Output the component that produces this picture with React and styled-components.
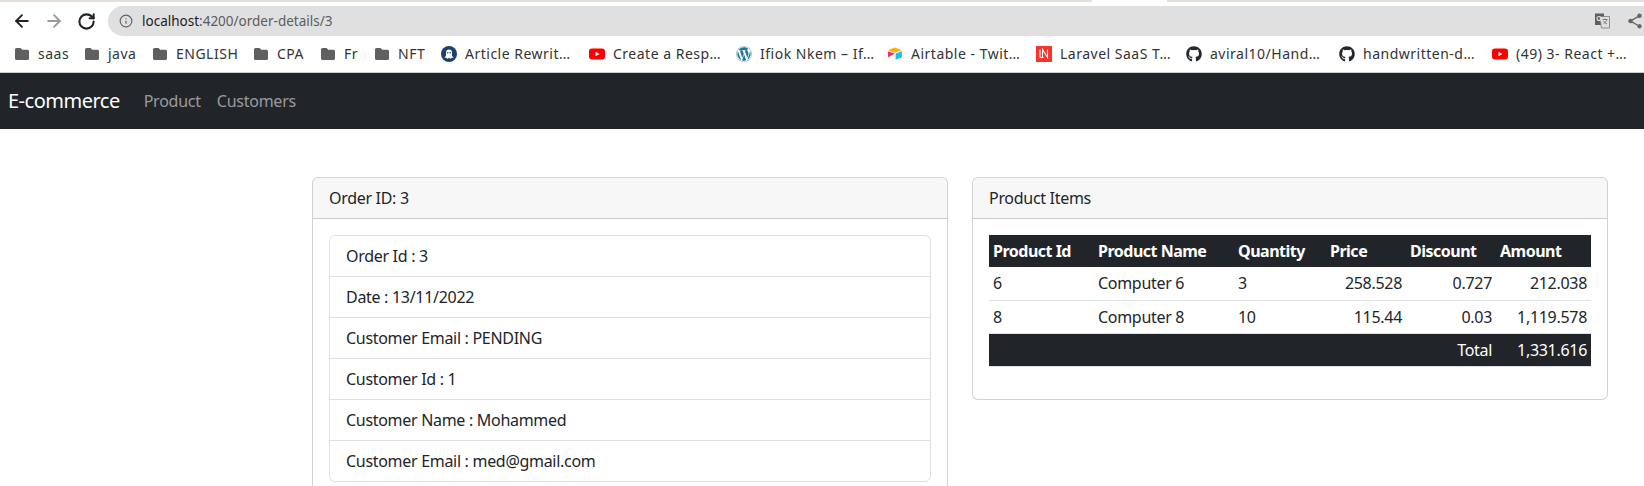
import React from "react";
import styled, { createGlobalStyle } from "styled-components";
import { ArrowLeft, ArrowRight, RotateCw, Info } from "lucide-react";
import { FaGithub, FaWordpress } from "react-icons/fa";
import { MdShare } from "react-icons/md";

const GlobalStyle = createGlobalStyle`
  * { box-sizing: border-box; }
  html, body { margin: 0; padding: 0; background: #fff; }
  body {
    font-family: "Noto Sans", "Open Sans", sans-serif;
    font-size: 16px;
    line-height: 24px;
    color: #212529;
    height: 486px;
    overflow: hidden;
  }
`;

const TabStrip = styled.div`
  height: 2px;
  background: linear-gradient(to right, #e6dfd9 0, #e6dfd9 1092px, #fff 1092px, #fff 1167px, #e6dfd9 1167px);
`;

const Toolbar = styled.div`
  height: 34px;
  display: flex;
  align-items: center;
  padding: 4px 0 0 12px;
  gap: 12px;
  background: #fff;
`;

const NavIcon = styled.span`
  display: flex;
  justify-content: center;
  width: 20px;
  color: ${({ $muted }) => ($muted ? "#9a9a9a" : "#222")};
`;

const UrlBar = styled.div`
  flex: 1;
  height: 30px;
  border-radius: 15px 0 0 15px;
  background: #e0e0e0;
  display: flex;
  align-items: center;
  padding-left: 11px;
  font-size: 13.5px;
  color: #5c5c5c;
  overflow: hidden;
`;

const UrlHost = styled.span`
  color: #202124;
  margin-left: 9px;
`;

const UrlActions = styled.div`
  margin-left: auto;
  display: flex;
  align-items: center;
  gap: 16px;
  color: #666;
`;

const Bookmarks = styled.div`
  height: 37px;
  display: flex;
  align-items: center;
  padding-left: 14px;
  border-bottom: 1px solid #cfcfcf;
  font-size: 14px;
  color: #333;
  white-space: nowrap;
  overflow: hidden;
`;

const Bookmark = styled.div`
  display: flex;
  align-items: center;
  gap: 8px;
  flex: none;
  width: ${({ $w }) => $w}px;
`;

const BookmarkLabel = styled.span`
  letter-spacing: 0.5px;
`;

const Navbar = styled.nav`
  height: 56px;
  background: #212529;
  display: flex;
  align-items: center;
  padding-left: 8px;
`;

const Brand = styled.a`
  color: #fff;
  font-size: 20px;
  margin-right: 16px;
  letter-spacing: -0.5px;
`;

const NavLink = styled.a`
  color: rgba(255, 255, 255, 0.55);
  padding: 8px;
  letter-spacing: -0.25px;
`;

const Row = styled.main`
  display: flex;
  gap: 24px;
  padding: 48px 36px 0 312px;
  align-items: flex-start;
`;

const Card = styled.section`
  flex: 1;
  min-width: 0;
  border: 1px solid rgba(0, 0, 0, 0.175);
  border-radius: 6px;
  background: #fff;
`;

const CardHeader = styled.div`
  padding: 8px 16px;
  background: rgba(0, 0, 0, 0.03);
  border-bottom: 1px solid rgba(0, 0, 0, 0.175);
  border-radius: 5px 5px 0 0;
  letter-spacing: -0.3px;
`;

const CardBody = styled.div`
  padding: 16px;
`;

const ListGroup = styled.ul`
  list-style: none;
  margin: 0;
  padding: 0;
  border: 1px solid rgba(0, 0, 0, 0.125);
  border-radius: 6px;
`;

const ListItem = styled.li`
  padding: 8px 16px;
  height: 41px;
  letter-spacing: -0.3px;
  border-bottom: 1px solid rgba(0, 0, 0, 0.125);
  &:last-child { border-bottom: 0; height: 40px; }
`;

const Table = styled.table`
  width: 100%;
  border-collapse: collapse;
  table-layout: fixed;
  margin-bottom: 16px;
  letter-spacing: -0.3px;
`;

const HeadCell = styled.th`
  background: #212529;
  color: #fff;
  font-weight: 700;
  text-align: left;
  padding: 4px;
  height: 32px;
  width: ${({ $w }) => $w}px;
  letter-spacing: -0.5px;
`;

const Cell = styled.td`
  padding: 4px 4px;
  height: 33px;
  text-align: ${({ $right }) => ($right ? "right" : "left")};
  border-bottom: 1px solid #dee2e6;
`;

const TotalCell = styled(Cell)`
  background: #212529;
  color: #fff;
`;

const FolderIcon = () => (
  <svg width="16" height="16" viewBox="0 0 16 16">
    <path d="M2.5 2h4l1.8 1.8h5.2A1.5 1.5 0 0 1 15 5.3v7.2a1.5 1.5 0 0 1-1.5 1.5h-11A1.5 1.5 0 0 1 1 12.5v-9A1.5 1.5 0 0 1 2.5 2z" fill="#5f5f5f" />
  </svg>
);

const YoutubeIcon = () => (
  <svg width="16" height="16" viewBox="0 0 16 16">
    <rect x="0" y="2.5" width="16" height="11" rx="3" fill="#f00" />
    <path d="M6.5 5.8L10.4 8l-3.9 2.2z" fill="#fff" />
  </svg>
);

const GhostIcon = () => (
  <svg width="16" height="16" viewBox="0 0 16 16">
    <circle cx="8" cy="8" r="8" fill="#1d3f72" />
    <path d="M5 9.5V6.5a3 3 0 0 1 6 0v3c0 .8.8 1.5 1.8 1.5-.3.8-1.3 1-2.2.6.1.7-.5 1.3-1.3 1.2L8 11.8l-1.3 1c-.8.1-1.4-.5-1.3-1.2-.9.4-1.9.2-2.2-.6C4.2 11 5 10.3 5 9.5z" fill="#fff" />
    <circle cx="6.8" cy="6.8" r="0.8" fill="#1d3f72" />
    <circle cx="9.2" cy="6.8" r="0.8" fill="#1d3f72" />
  </svg>
);

const AirtableIcon = () => (
  <svg width="16" height="16" viewBox="0 0 16 16">
    <path d="M7 1.8L1.8 3.9c-.3.1-.3.5 0 .6L7 6.6c.6.2 1.2.2 1.8 0L14 4.5c.3-.1.3-.5 0-.6L8.8 1.8C8.2 1.6 7.6 1.6 7 1.8z" fill="#fcb400" />
    <path d="M8.6 7.9v5.4c0 .3.3.4.5.3l5.5-2.2c.2-.1.3-.2.3-.4V5.6c0-.3-.3-.4-.5-.3L8.9 7.5c-.2.1-.3.2-.3.4z" fill="#18bfff" />
    <path d="M7.4 8.1L1.5 11c-.3.1-.5-.1-.5-.3V5.7c0-.1 0-.2.1-.2.1-.1.2-.1.3 0L7.4 7.6c.3.1.3.4 0 .5z" fill="#f82b60" />
  </svg>
);

const LaravelNewsIcon = () => (
  <svg width="16" height="16" viewBox="0 0 16 16">
    <rect width="16" height="16" fill="#f9322c" />
    <path d="M4 3.5v8h3.5M6.5 11.5v-8l5 8v-8" stroke="#fff" strokeWidth="1.1" fill="none" />
  </svg>
);

const TranslateIcon = () => (
  <svg width="15" height="16" viewBox="0 0 15 16">
    <rect x="0" y="0.5" width="9" height="11.5" fill="#5f5f5f" />
    <path d="M4.5 3.5h10v11.5H6.5z" fill="#e0e0e0" stroke="#777" strokeWidth="0.8" />
    <path d="M7.5 6.5h5M10 5.5v1M11.8 6.5c-.4 1.8-1.7 3.2-3.3 4.2M8.5 7.8c.6 1.3 1.8 2.5 3.5 3" stroke="#666" fill="none" strokeWidth="0.8" />
    <circle cx="4" cy="5.5" r="2" fill="none" stroke="#e0e0e0" strokeWidth="1.1" />
  </svg>
);

const bookmarks = [
  { label: "saas", w: 70, icon: <FolderIcon /> },
  { label: "java", w: 68, icon: <FolderIcon /> },
  { label: "ENGLISH", w: 101, icon: <FolderIcon /> },
  { label: "CPA", w: 67, icon: <FolderIcon /> },
  { label: "Fr", w: 54, icon: <FolderIcon /> },
  { label: "NFT", w: 67, icon: <FolderIcon /> },
  { label: "Article Rewrit…", w: 148, icon: <GhostIcon /> },
  { label: "Create a Resp…", w: 147, icon: <YoutubeIcon /> },
  { label: "Ifiok Nkem – If…", w: 151, icon: <FaWordpress size={16} color="#21759b" /> },
  { label: "Airtable - Twit…", w: 149, icon: <AirtableIcon /> },
  { label: "Laravel SaaS T…", w: 150, icon: <LaravelNewsIcon /> },
  { label: "aviral10/Hand…", w: 153, icon: <FaGithub size={16} color="#24292e" /> },
  { label: "handwritten-d…", w: 153, icon: <FaGithub size={16} color="#24292e" /> },
  { label: "(49) 3- React +…", w: 150, icon: <YoutubeIcon /> },
];

const orderLines = [
  "Order Id : 3",
  "Date : 13/11/2022",
  "Customer Email : PENDING",
  "Customer Id : 1",
  "Customer Name : Mohammed",
  "Customer Email : med@gmail.com",
];

const columns = [
  { label: "Product Id", w: 105 },
  { label: "Product Name", w: 140 },
  { label: "Quantity", w: 92 },
  { label: "Price", w: 80 },
  { label: "Discount", w: 90 },
  { label: "Amount", w: 95 },
];

const items = [
  ["6", "Computer 6", "3", "258.528", "0.727", "212.038"],
  ["8", "Computer 8", "10", "115.44", "0.03", "1,119.578"],
];

const App = () => (
  <>
    <GlobalStyle />
    <TabStrip />
    <Toolbar>
      <NavIcon><ArrowLeft size={20} strokeWidth={2.2} /></NavIcon>
      <NavIcon $muted><ArrowRight size={20} strokeWidth={2.2} /></NavIcon>
      <NavIcon><RotateCw size={19} strokeWidth={2.6} /></NavIcon>
      <UrlBar>
        <Info size={14} color="#5f6368" />
        <UrlHost>localhost</UrlHost>:4200/order-details/3
        <UrlActions>
          <TranslateIcon />
          <MdShare size={18} />
        </UrlActions>
      </UrlBar>
    </Toolbar>
    <Bookmarks>
      {bookmarks.map((b) => (
        <Bookmark key={b.label} $w={b.w}>
          {b.icon}
          <BookmarkLabel>{b.label}</BookmarkLabel>
        </Bookmark>
      ))}
    </Bookmarks>
    <Navbar>
      <Brand>E-commerce</Brand>
      <NavLink>Product</NavLink>
      <NavLink>Customers</NavLink>
    </Navbar>
    <Row>
      <Card>
        <CardHeader>Order ID: 3</CardHeader>
        <CardBody>
          <ListGroup>
            {orderLines.map((line, i) => (
              <ListItem key={i}>{line}</ListItem>
            ))}
          </ListGroup>
        </CardBody>
      </Card>
      <Card>
        <CardHeader>Product Items</CardHeader>
        <CardBody>
          <Table>
            <thead>
              <tr>
                {columns.map((c) => (
                  <HeadCell key={c.label} $w={c.w}>{c.label}</HeadCell>
                ))}
              </tr>
            </thead>
            <tbody>
              {items.map((row) => (
                <tr key={row[0]}>
                  {row.map((v, i) => (
                    <Cell key={i} $right={i > 2}>{v}</Cell>
                  ))}
                </tr>
              ))}
              <tr>
                <TotalCell $right colSpan={5}>Total</TotalCell>
                <TotalCell $right>1,331.616</TotalCell>
              </tr>
            </tbody>
          </Table>
        </CardBody>
      </Card>
    </Row>
  </>
);

export default App;
